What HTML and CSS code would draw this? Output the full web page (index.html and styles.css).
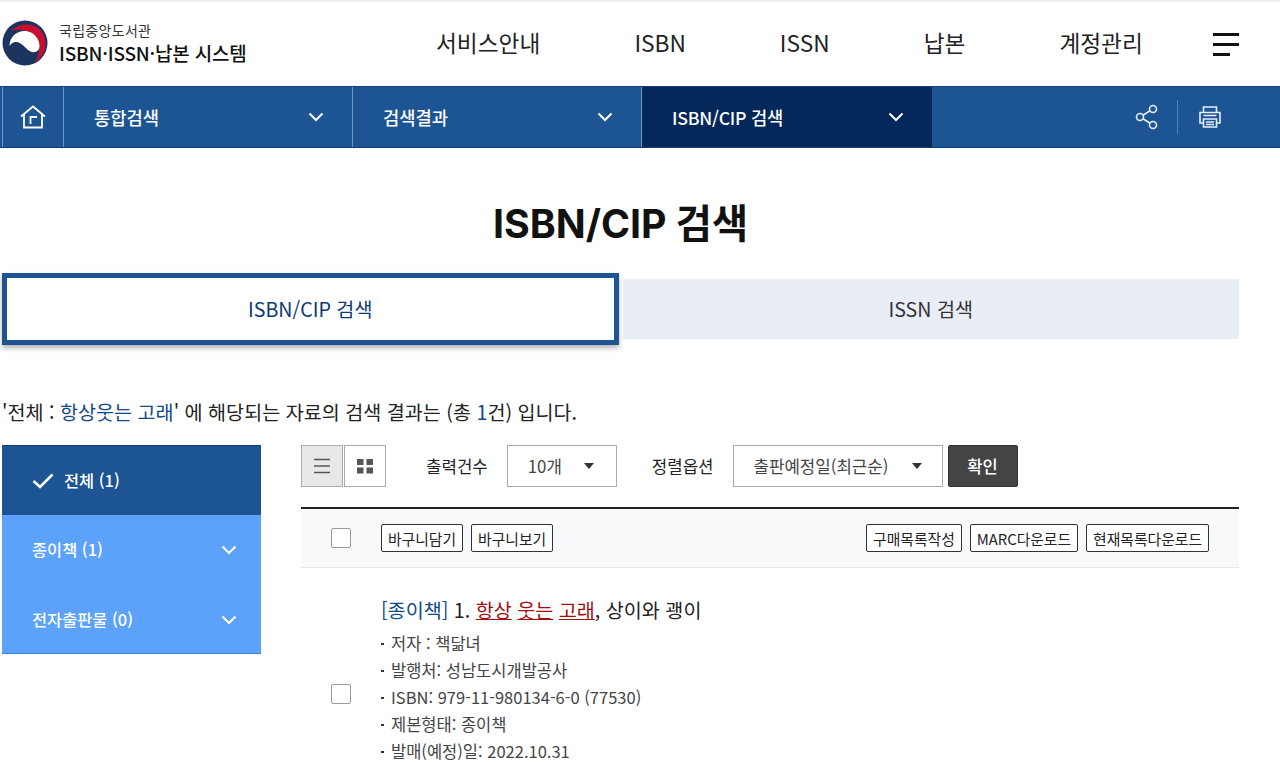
FILE: index.html
```html
<!DOCTYPE html>
<html lang="ko">
<head>
    <meta charset="UTF-8">
    <title>ISBN/CIP 검색</title>
    <link rel="stylesheet" href="styles.css">
</head>
<body>
    <header class="header">
        <a class="logo">
            <svg class="logo-mark" width="46" height="46" viewBox="0 0 46 46">
                <circle cx="23" cy="23" r="22.500" fill="#1d3461"/>
                <path d="M9 11C15 4 28 2 36 8c10 8 11 24-3 35 5-10 6-18 0-26C27 10 17 8 9 11z" fill="#c8102e"/>
                <path d="M7.500 26C7.500 15 17 10 24 11c8 1 13.500 8 13.500 15 0 5-4.500 7.500-9 5.500-4.500-2-6.500-7-12-9-4-1.500-7.500.5-9 3.500z" fill="#fff"/>
            </svg>
            <span class="logo-text">
                <small>국립중앙도서관</small>
                <strong>ISBN·ISSN·납본 시스템</strong>
            </span>
        </a>
        <nav class="gnb">
            <a>서비스안내</a>
            <a>ISBN</a>
            <a>ISSN</a>
            <a>납본</a>
            <a>계정관리</a>
        </nav>
        <button class="menu-btn"><span></span><span></span><span class="short"></span></button>
    </header>

    <div class="location">
        <a class="home">
            <svg width="26" height="24" viewBox="0 0 26 24" fill="none" stroke="#fff" stroke-width="1.800">
                <path d="M1 11.500 13 1.500l12 10M4 9.500V22.500h18V9.500"/>
                <path d="M10.500 19v-7h6.500"/>
            </svg>
        </a>
        <a class="loc-item"><span>통합검색</span><svg class="chev" width="16" height="10" viewBox="0 0 16 10"><path d="M1.500 1.500 8 8l6.500-6.500" fill="none" stroke="#fff" stroke-width="2"/></svg></a>
        <a class="loc-item"><span>검색결과</span><svg class="chev" width="16" height="10" viewBox="0 0 16 10"><path d="M1.500 1.500 8 8l6.500-6.500" fill="none" stroke="#fff" stroke-width="2"/></svg></a>
        <a class="loc-item current"><span>ISBN/CIP 검색</span><svg class="chev" width="16" height="10" viewBox="0 0 16 10"><path d="M1.500 1.500 8 8l6.500-6.500" fill="none" stroke="#fff" stroke-width="2"/></svg></a>
        <div class="loc-tools">
            <svg width="24" height="26" viewBox="0 0 24 26" fill="none" stroke="#e6eefa" stroke-width="1.600">
                <circle cx="18" cy="5" r="3.500"/>
                <circle cx="5" cy="13" r="3.500"/>
                <circle cx="18" cy="21" r="3.500"/>
                <path d="M8 11.200 15 6.800M8 14.800l7 4.400"/>
            </svg>
            <i class="tool-line"></i>
            <svg width="22" height="22" viewBox="0 0 22 22" fill="none" stroke="#e6eefa" stroke-width="1.600">
                <path d="M4.500 6V1h13v5M4.500 17H1V6.500h20V17h-3.500"/>
                <path d="M4.500 13h13v8h-13zM4.500 9.500h13M7 16h8M7 18.500h8"/>
            </svg>
        </div>
    </div>

    <main class="content">
        <h1>ISBN/CIP 검색</h1>

        <div class="tabs">
            <a class="tab active">ISBN/CIP 검색</a>
            <a class="tab">ISSN 검색</a>
        </div>

        <p class="summary">'전체 : <em>항상웃는 고래</em>' 에 해당되는 자료의 검색 결과는 (총 <em>1</em>건) 입니다.</p>

        <div class="result-wrap">
            <ul class="side">
                <li class="on">
                    <svg width="22" height="16" viewBox="0 0 22 16"><path d="M1.500 8 8 14 20.500 1.500" fill="none" stroke="#fff" stroke-width="2.600"/></svg>
                    <span>전체 (1)</span>
                </li>
                <li><span>종이책 (1)</span><svg width="16" height="10" viewBox="0 0 16 10"><path d="M1.500 1.500 8 8l6.500-6.500" fill="none" stroke="#fff" stroke-width="2"/></svg></li>
                <li><span>전자출판물 (0)</span><svg width="16" height="10" viewBox="0 0 16 10"><path d="M1.500 1.500 8 8l6.500-6.500" fill="none" stroke="#fff" stroke-width="2"/></svg></li>
            </ul>

            <section class="results">
                <div class="toolbar">
                    <button class="view on">
                        <svg width="18" height="16" viewBox="0 0 18 16"><path d="M1 1.500h16M1 8h16M1 14.500h16" stroke="#555" stroke-width="1.300"/></svg>
                    </button>
                    <button class="view">
                        <svg width="18" height="16" viewBox="0 0 18 16" fill="#555"><rect x="1" y="1" width="6.500" height="6"/><rect x="10.500" y="1" width="6.500" height="6"/><rect x="1" y="9.500" width="6.500" height="6"/><rect x="10.500" y="9.500" width="6.500" height="6"/></svg>
                    </button>
                    <label class="label first">출력건수</label>
                    <div class="select count"><span>10개</span><i class="caret"></i></div>
                    <label class="label second">정렬옵션</label>
                    <div class="select sort"><span>출판예정일(최근순)</span><i class="caret"></i></div>
                    <button class="ok">확인</button>
                </div>

                <div class="list-head">
                    <span class="check-col"><i class="check"></i></span>
                    <button class="mini">바구니담기</button>
                    <button class="mini">바구니보기</button>
                    <div class="head-right">
                        <button class="mini">구매목록작성</button>
                        <button class="mini">MARC다운로드</button>
                        <button class="mini">현재목록다운로드</button>
                    </div>
                </div>

                <article class="item">
                    <span class="check-col item-check"><i class="check"></i></span>
                    <div class="item-body">
                        <h2><em>[종이책]</em> 1. <u>항상</u> <u>웃는</u> <u>고래</u>, 상이와 괭이</h2>
                        <ul class="meta">
                            <li>저자 : 책닮녀</li>
                            <li>발행처: 성남도시개발공사</li>
                            <li>ISBN: 979-11-980134-6-0 (77530)</li>
                            <li>제본형태: 종이책</li>
                            <li>발매(예정)일: 2022.10.31</li>
                        </ul>
                    </div>
                </article>
            </section>
        </div>
    </main>
</body>
</html>
```

FILE: styles.css
```css
* {
    box-sizing: border-box;
}
html, body {
    height: 764px;
    overflow: hidden;
}
body {
    margin: 0;
    font-family: "Noto Sans CJK KR", "Noto Sans", sans-serif;
    color: #222;
    background-color: #fff;
}
em {
    font-style: normal;
}
ul {
    margin: 0;
    padding: 0;
    list-style: none;
}
button {
    font-family: inherit;
    cursor: pointer;
}

.header {
    display: flex;
    align-items: center;
    height: 86px;
    padding: 0 41px 0 2px;
    border-top: 2px solid #eee;
}
.logo {
    display: flex;
    align-items: center;
    width: 434px;
}
.logo-mark {
    margin: 0 11px 2px 0;
}
.logo-text {
    display: flex;
    flex-direction: column;
    padding-bottom: 3px;
}
.logo-text small {
    font-size: 14px;
    line-height: 19px;
    letter-spacing: 0.3px;
    color: #333;
}
.logo-text strong {
    font-size: 19px;
    line-height: 25px;
    font-weight: 500;
    color: #111;
    letter-spacing: -0.2px;
}
.gnb {
    display: flex;
    gap: 94px;
    padding-bottom: 4px;
    font-size: 22.700px;
    color: #222;
}
.menu-btn {
    display: flex;
    flex-direction: column;
    gap: 7px;
    width: 26px;
    margin-left: auto;
    padding: 0;
    border: 0;
    background: none;
}
.menu-btn span {
    display: block;
    width: 26px;
    height: 3px;
    background-color: #111;
}
.menu-btn .short {
    width: 17px;
}

.location {
    display: flex;
    height: 62px;
    padding-left: 2px;
    background-color: #1d5594;
    border-top: 1px solid #0f3e78;
    border-bottom: 1px solid #0f3e78;
    color: #fff;
}
.home {
    display: flex;
    align-items: center;
    justify-content: center;
    width: 62px;
    border-left: 1px solid #6f97c6;
    border-right: 1px solid #6f97c6;
}
.loc-item {
    display: flex;
    align-items: center;
    justify-content: space-between;
    width: 289px;
    padding: 0 28px 0 30px;
    border-right: 1px solid #6f97c6;
    font-size: 17.700px;
    font-weight: 500;
}
.loc-item.current {
    width: 290px;
    background-color: #032859;
    border-right: 0;
    letter-spacing: -0.25px;
}
.loc-tools {
    display: flex;
    align-items: center;
    margin-left: auto;
    padding-right: 59px;
}
.tool-line {
    width: 1px;
    height: 34px;
    margin: 0 21px 0 18px;
    background-color: #4f81bb;
}

.content {
    padding: 0 41px 0 2px;
}
h1 {
    margin: 0;
    padding-top: 49px;
    font-family: Inter, "Noto Sans CJK KR", sans-serif;
    font-size: 39.300px;
    line-height: 54px;
    font-weight: 700;
    text-align: center;
    color: #111;
}
.tabs {
    display: grid;
    grid-template-columns: 1fr 1fr;
    column-gap: 4px;
    margin-top: 28px;
}
.tab {
    display: flex;
    align-items: center;
    justify-content: center;
    height: 60px;
    padding-bottom: 2px;
    font-size: 19.600px;
    background-color: #e9edf6;
    color: #333;
}
.tab.active {
    height: 72px;
    margin: -6px 0;
    border: 5px solid #1d5594;
    background-color: #fff;
    color: #0b3a73;
    box-shadow: 0 3px 5px rgba(0, 0, 0, 0.3);
}
.summary {
    margin: 58px 0 0;
    font-size: 19.600px;
    line-height: 30px;
    color: #222;
}
.summary em {
    color: #0f4a86;
}

.result-wrap {
    display: flex;
    gap: 40px;
    margin-top: 18px;
}
.side {
    width: 259px;
    height: 209px;
    background-color: #5ca2fb;
    border-bottom: 1px solid #3f86e0;
    color: #fff;
    font-size: 16.400px;
    font-weight: 500;
}
.side li {
    display: flex;
    align-items: center;
    justify-content: space-between;
    height: 70px;
    padding: 0 24px 0 30px;
}
.side li span {
    margin-bottom: 2px;
}
.side li.on {
    justify-content: flex-start;
    gap: 10px;
    background-color: #1d5594;
    border-top: 1px solid #0f3e78;
}
.results {
    flex: 1;
}
.toolbar {
    display: flex;
    align-items: center;
    height: 42px;
}
.view {
    display: flex;
    align-items: center;
    justify-content: center;
    width: 42px;
    height: 42px;
    margin-right: 1px;
    padding: 0;
    border: 1px solid #aaa;
    background-color: #fff;
}
.view.on {
    background-color: #e8e8e8;
}
.label {
    font-size: 16.800px;
    color: #222;
}
.label.first {
    margin: 0 19px 0 39px;
}
.label.second {
    margin: 0 19px 0 35px;
}
.select {
    display: flex;
    align-items: center;
    justify-content: space-between;
    height: 42px;
    border: 1px solid #aaa;
    font-size: 16.800px;
    color: #444;
    background-color: #fff;
}
.select.count {
    width: 110px;
    padding: 0 22px 0 20px;
}
.select.sort {
    width: 210px;
    padding: 0 20px 0 20px;
}
.caret {
    width: 0;
    height: 0;
    border-left: 5px solid transparent;
    border-right: 5px solid transparent;
    border-top: 6px solid #333;
}
.ok {
    width: 70px;
    height: 42px;
    margin-left: 5px;
    border: 1px solid #333;
    border-radius: 2px;
    background-color: #444;
    color: #fff;
    font-size: 16.500px;
    font-weight: 500;
}

.list-head {
    display: flex;
    align-items: center;
    height: 61px;
    margin-top: 20px;
    padding-right: 30px;
    background-color: #f8f9fa;
    border-top: 2px solid #222;
    border-bottom: 1px solid #e6e6e6;
}
.check-col {
    display: flex;
    justify-content: center;
    flex: none;
    width: 80px;
}
.check {
    display: block;
    width: 20px;
    height: 20px;
    border: 1px solid #999;
    border-radius: 2px;
    background-color: #fff;
}
.mini {
    height: 28px;
    margin-right: 8px;
    padding: 0 6px;
    border: 1px solid #333;
    border-radius: 2px;
    background-color: #fff;
    color: #222;
    font-size: 14.800px;
}
.head-right {
    display: flex;
    margin-left: auto;
}
.head-right .mini:last-child {
    margin-right: 0;
}
.item {
    display: flex;
    height: 196px;
    padding-top: 26px;
    overflow: hidden;
}
.item-check {
    margin-top: 90px;
}
.item-body {
    flex: 1;
}
.item h2 {
    margin: 0 0 4px;
    font-size: 19.600px;
    line-height: 32px;
    font-weight: 400;
    color: #222;
}
.item h2 em {
    color: #0f4a86;
}
.item h2 u {
    color: #a30d0d;
}
.meta li {
    position: relative;
    padding-left: 10px;
    font-size: 16.500px;
    line-height: 27px;
    color: #444;
}
.meta li::before {
    content: "";
    position: absolute;
    left: 0;
    top: 13px;
    width: 3px;
    height: 2px;
    background-color: #333;
}
```
